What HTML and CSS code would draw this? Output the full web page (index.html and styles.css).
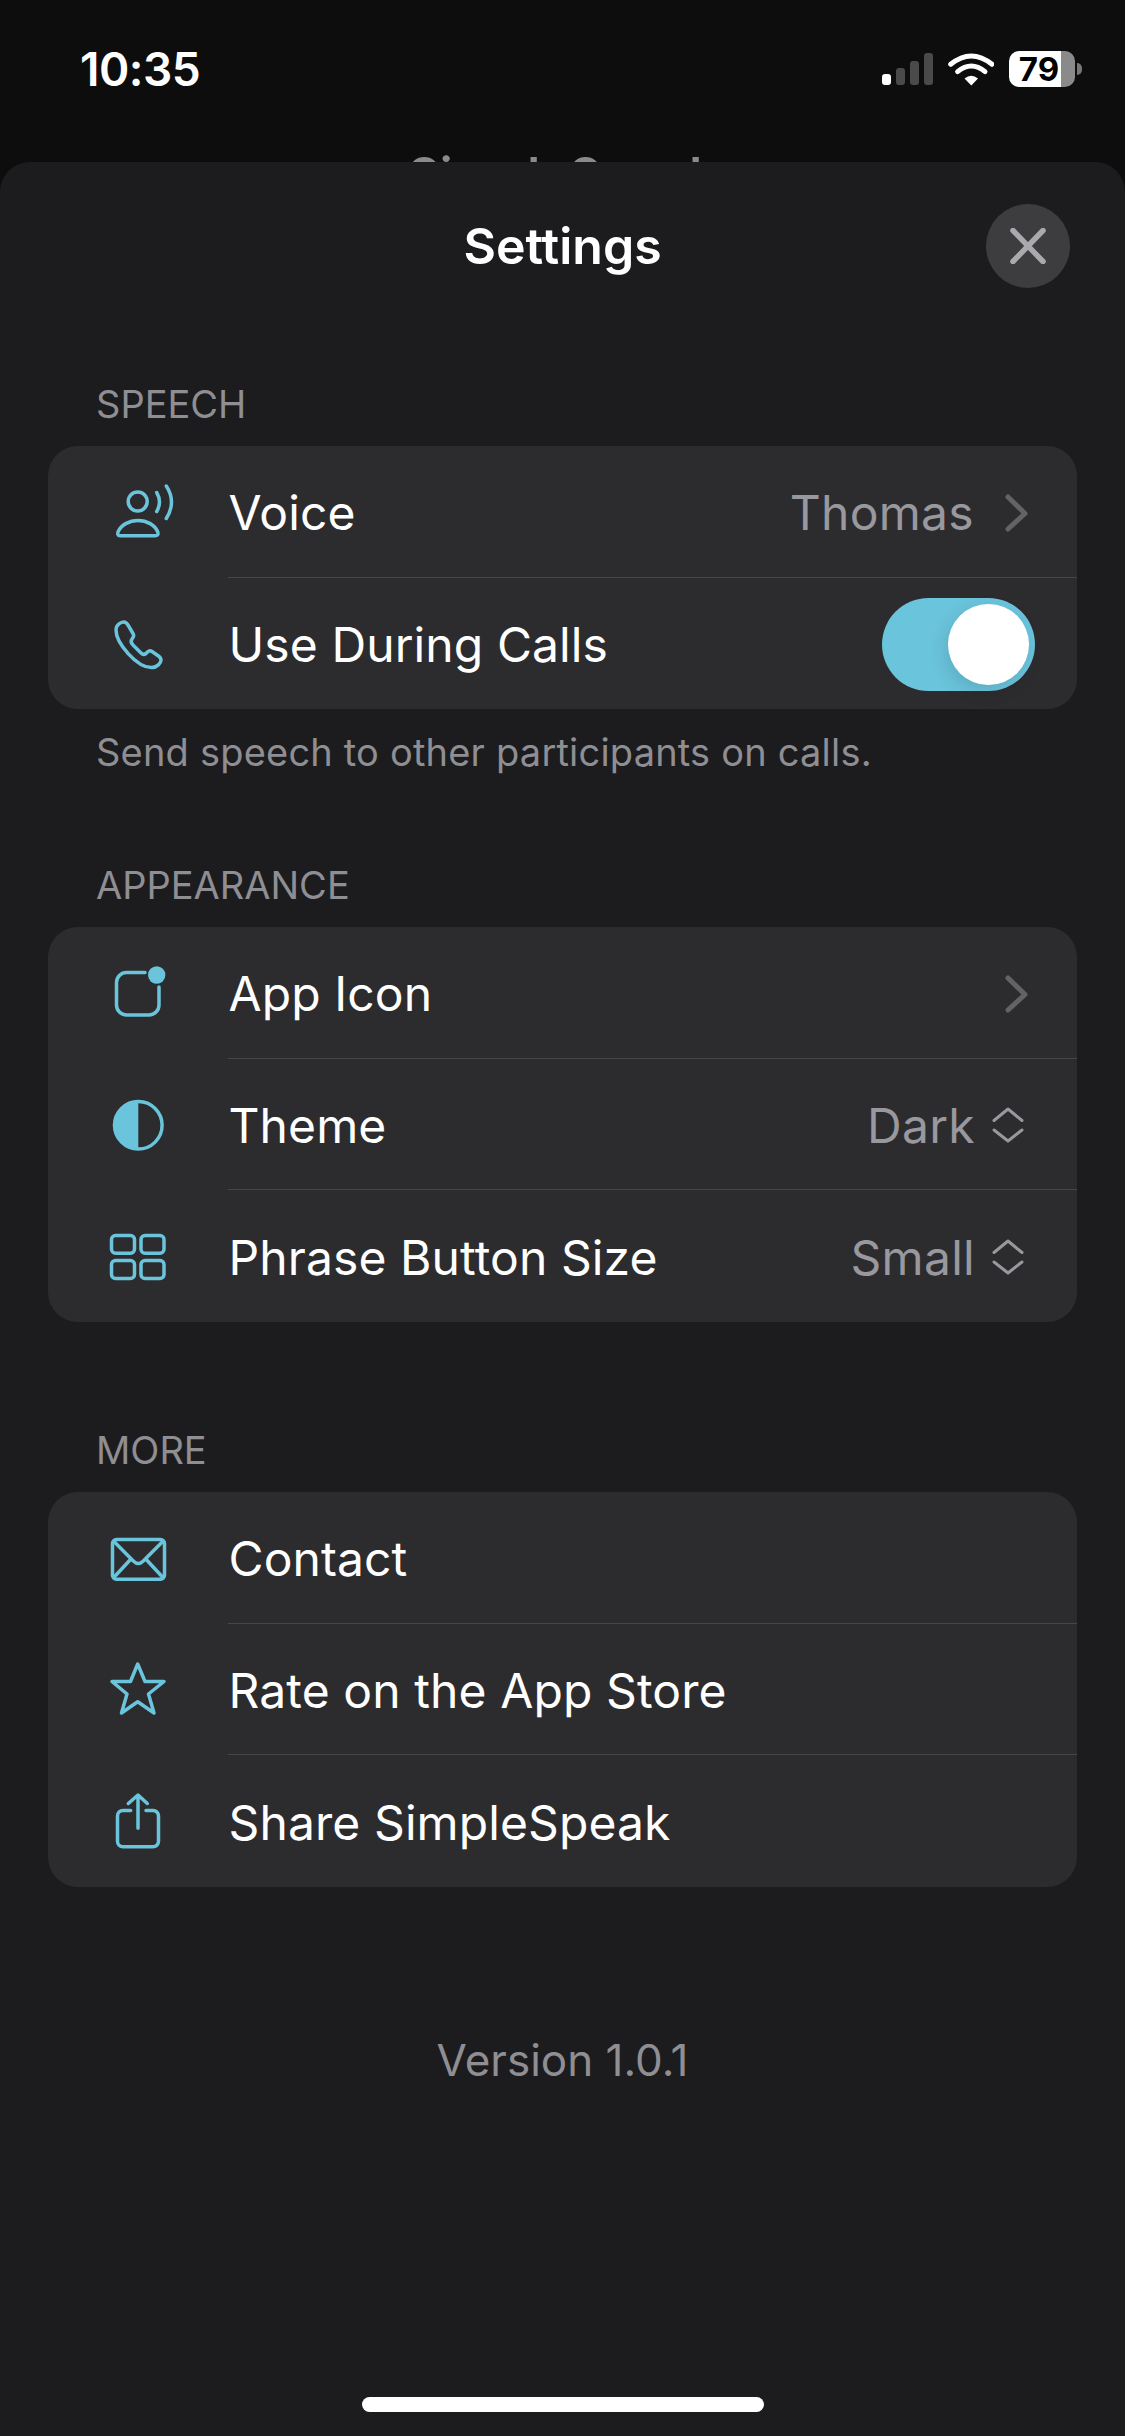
FILE: index.html
```html
<!DOCTYPE html>
<html lang="en">
<head>
    <meta charset="UTF-8">
    <meta name="viewport" content="width=device-width, initial-scale=1.0">
    <title>Settings</title>
    <link rel="stylesheet" href="styles.css">
</head>
<body>
    <div class="status-bar">
        <span class="time">10:35</span>
        <div class="status-icons">
            <div class="signal">
                <span class="bar bar-on" id="bar1"></span>
                <span class="bar" id="bar2"></span>
                <span class="bar" id="bar3"></span>
                <span class="bar" id="bar4"></span>
            </div>
            <svg class="wifi" width="46" height="33" viewBox="0 0 46 33">
                <path d="M2.7 11.3 Q23.3 -5.3 44 11.3" fill="none" stroke="#fff" stroke-width="5" stroke-linecap="round"/>
                <path d="M9.6 18.7 Q23.3 7.3 37 18.7" fill="none" stroke="#fff" stroke-width="5" stroke-linecap="round"/>
                <path d="M16.5 25.5 Q23.3 20 30 25.5 L23.3 32.5 Z" fill="#fff"/>
            </svg>
            <div class="battery">
                <span class="battery-level">79</span>
            </div>
            <span class="battery-nub"></span>
        </div>
    </div>

    <!-- title of the screen under the sheet, only its top shows -->
    <div class="behind">
        <span class="behind-title">SimpleSpeak</span>
    </div>

    <div class="sheet">
        <div class="sheet-header">
            <span class="sheet-title">Settings</span>
            <div class="close-btn">
                <svg width="36" height="36" viewBox="0 0 36 36">
                    <path d="M3 2.5 L33 33.5 M33 2.5 L3 33.5" stroke="#a9a9ae" stroke-width="5.5" stroke-linecap="round"/>
                </svg>
            </div>
        </div>

        <div class="section section-speech">
            <div class="section-label">SPEECH</div>
            <div class="card">
                <div class="row">
                    <svg class="icon" viewBox="0 0 72 72">
                        <circle cx="35.7" cy="25.5" r="9.5"/>
                        <path d="M18 59.7 H53 Q57 59.7 55.8 56 C53 49 45 44.5 36 44.5 C27 44.5 19 49 16 56 Q15 59.7 18 59.7 Z"/>
                        <path d="M54.7 16.5 Q60.3 26 54.7 35.5"/>
                        <path d="M64.3 10 Q74.7 26 64.3 42.5"/>
                    </svg>
                    <div class="row-body">
                        <span class="row-label">Voice</span>
                        <span class="row-value">Thomas</span>
                        <svg class="chevron" width="26" height="38" viewBox="0 0 26 38">
                            <path d="M4 3 L21 19.5 L4 35"/>
                        </svg>
                    </div>
                </div>
                <div class="row">
                    <svg class="icon" viewBox="0 0 72 72">
                        <path d="M14 23 C14 36 35 61 50 60.5 C55 60.5 59 56 59 53 C59 51 58 50 56.5 49 L50 44.5 C48 43 47 43.5 45.5 45 L44 46.5 C42 48 40.5 47.5 39 46 L31 38 C29 36 28.5 34 30 32 L31 30.5 C32 29 32 28 31 26.5 L26 18 C24.5 15.5 22 14.5 19.5 15.5 C16 17 14 19.5 14 23 Z"/>
                    </svg>
                    <div class="row-body">
                        <span class="row-label">Use During Calls</span>
                        <div class="toggle"><span class="knob"></span></div>
                    </div>
                </div>
            </div>
            <div class="section-note">Send speech to other participants on calls.</div>
        </div>

        <div class="section section-appearance">
            <div class="section-label">APPEARANCE</div>
            <div class="card">
                <div class="row">
                    <svg class="icon" viewBox="0 0 72 72">
                        <path d="M43 15.5 H24.5 a10 10 0 0 0 -10 10 V48 a10 10 0 0 0 10 10 H47 a10 10 0 0 0 10 -10 V30"/>
                        <circle class="icon-fill" cx="54.7" cy="18" r="8.7"/>
                    </svg>
                    <div class="row-body">
                        <span class="row-label">App Icon</span>
                        <svg class="chevron" width="26" height="38" viewBox="0 0 26 38">
                            <path d="M4 3 L21 19.5 L4 35"/>
                        </svg>
                    </div>
                </div>
                <div class="row">
                    <svg class="icon" viewBox="0 0 72 72">
                        <circle cx="36.3" cy="37.3" r="23.8"/>
                        <path class="icon-fill" d="M36.3 13.5 A23.8 23.8 0 0 0 36.3 61.1 Z"/>
                    </svg>
                    <div class="row-body">
                        <span class="row-label">Theme</span>
                        <span class="row-value">Dark</span>
                        <svg class="updown" width="32" height="38" viewBox="0 0 32 38">
                            <path d="M2 14.5 L16 3 L30 14.5 M2 24 L16 35 L30 24"/>
                        </svg>
                    </div>
                </div>
                <div class="row">
                    <svg class="icon" viewBox="0 0 72 72">
                        <rect x="9.5" y="15.5" width="23" height="17.7" rx="4"/>
                        <rect x="39" y="15.5" width="23" height="17.7" rx="4"/>
                        <rect x="9.5" y="40.5" width="23" height="18" rx="4"/>
                        <rect x="39" y="40.5" width="23" height="18" rx="4"/>
                    </svg>
                    <div class="row-body">
                        <span class="row-label">Phrase Button Size</span>
                        <span class="row-value">Small</span>
                        <svg class="updown" width="32" height="38" viewBox="0 0 32 38">
                            <path d="M2 14.5 L16 3 L30 14.5 M2 24 L16 35 L30 24"/>
                        </svg>
                    </div>
                </div>
            </div>
        </div>

        <div class="section section-more">
            <div class="section-label">MORE</div>
            <div class="card">
                <div class="row">
                    <svg class="icon" viewBox="0 0 72 72">
                        <rect x="10.5" y="17.5" width="52" height="39.7" rx="4"/>
                        <path d="M12 19.5 L31.3 39 Q36.3 44 41.3 39 L60.7 19.5 M12 55.3 L28 38 M60.7 55.3 L44.7 38"/>
                    </svg>
                    <div class="row-body">
                        <span class="row-label">Contact</span>
                    </div>
                </div>
                <div class="row">
                    <svg class="icon" viewBox="0 0 72 72">
                        <path d="M35.7 11 L43 28.5 H62 L46.5 41 L52 60 L35.7 48.7 L19.5 60 L25 41 L10 28.5 H28.5 Z"/>
                    </svg>
                    <div class="row-body">
                        <span class="row-label">Rate on the App Store</span>
                    </div>
                </div>
                <div class="row">
                    <svg class="icon" viewBox="0 0 72 72">
                        <path d="M28.7 25.5 H21 a5.5 5.5 0 0 0 -5.5 5.5 V56.3 a5.5 5.5 0 0 0 5.5 5.5 H51 a5.5 5.5 0 0 0 5.5 -5.5 V31 a5.5 5.5 0 0 0 -5.5 -5.5 H44"/>
                        <path d="M36 43.3 V10.7 M26.3 18.5 L36 10 L45.3 18.5"/>
                    </svg>
                    <div class="row-body">
                        <span class="row-label">Share SimpleSpeak</span>
                    </div>
                </div>
            </div>
        </div>

        <div class="version">Version 1.0.1</div>
        <div class="home-indicator"></div>
    </div>
</body>
</html>
```

FILE: styles.css
```css
html, body {
    margin: 0;
    padding: 0;
}
body {
    width: 1125px;
    height: 2436px;
    overflow: hidden;
    background-color: #0d0d0e;
    color: #fff;
    font-family: Inter, "Noto Sans", sans-serif;
    display: flex;
    flex-direction: column;
}

/* status bar */
.status-bar {
    height: 136px;
    padding: 45px 43px 0 80px;
    box-sizing: border-box;
    display: flex;
    justify-content: space-between;
    align-items: flex-start;
}
.time {
    font-size: 46px;
    font-weight: 600;
    line-height: 48px;
    letter-spacing: -0.5px;
}
.status-icons {
    display: flex;
    align-items: center;
    height: 36px;
    margin-top: 6px;
}
.signal {
    display: flex;
    align-items: flex-end;
    gap: 5px;
    height: 32px;
    margin-right: 15px;
}
.bar {
    width: 9px;
    border-radius: 3px;
    background-color: #4a4a4a;
}
.bar-on {
    background-color: #fff;
}
#bar1 { height: 11px; }
#bar2 { height: 17px; }
#bar3 { height: 24px; }
#bar4 { height: 32px; }
.wifi {
    margin-right: 15px;
}
.battery {
    width: 66px;
    height: 36px;
    border-radius: 10px;
    background: linear-gradient(to right, #fff 79%, #8a8a8a 79%);
    color: #000;
    font-size: 33px;
    font-weight: 700;
    line-height: 36px;
    text-align: center;
}
.battery-level {
    display: inline-block;
    margin-left: -6px;
}
.battery-nub {
    width: 5px;
    height: 12px;
    margin-left: 2px;
    border-radius: 0 6px 6px 0;
    background-color: #777;
}

/* the screen underneath */
.behind {
    height: 26px;
    overflow: hidden;
    text-align: center;
    flex-shrink: 0;
}
.behind-title {
    display: block;
    font-size: 49px;
    font-weight: 600;
    line-height: 60px;
    margin-top: 10px;
    color: #8a8a8c;
}

/* sheet */
.sheet {
    flex: 1;
    display: flex;
    flex-direction: column;
    background-color: #1c1c1e;
    border-radius: 30px 30px 0 0;
}
.sheet-header {
    height: 168px;
    flex-shrink: 0;
    position: relative;
    display: flex;
    align-items: center;
    justify-content: center;
}
.sheet-title {
    font-size: 50px;
    font-weight: 600;
}
.close-btn {
    position: absolute;
    top: 42px;
    right: 55px;
    width: 84px;
    height: 84px;
    border-radius: 50%;
    background-color: #3d3d40;
    display: flex;
    align-items: center;
    justify-content: center;
}

/* sections */
.section {
    margin: 0 48px;
}
.section-speech {
    margin-top: 50px;
}
.section-appearance {
    margin-top: 84.67px;
}
.section-more {
    margin-top: 104px;
}
.section-label {
    font-size: 38px;
    line-height: 48px;
    color: #8e8e93;
    margin: 0 0 18px 48px;
}
.section-note {
    font-size: 38px;
    line-height: 48px;
    color: #8e8e93;
    margin: 19px 0 0 48px;
    letter-spacing: 0.2px;
}
.card {
    background-color: #2c2c2e;
    border-radius: 30px;
    overflow: hidden;
}
.row {
    height: 131.67px;
    display: flex;
    align-items: center;
}
.row .icon {
    width: 72px;
    height: 72px;
    margin: 0 54px 0 54px;
    flex-shrink: 0;
    fill: none;
    stroke: #6ac4dc;
    stroke-width: 3.5;
    stroke-linecap: round;
    stroke-linejoin: round;
}
.row .icon .icon-fill {
    fill: #6ac4dc;
    stroke: none;
}
.row-body {
    flex: 1;
    height: 100%;
    box-sizing: border-box;
    padding: 3px 47px 0 0.5px;
    display: flex;
    align-items: center;
    border-bottom: 1px solid #464648;
}
.row:last-child .row-body {
    border-bottom-color: transparent;
}
.row-label {
    flex: 1;
    font-size: 48px;
    letter-spacing: 0.1px;
}
.row-value {
    font-size: 48px;
    letter-spacing: 0.3px;
    color: #98989e;
}
.chevron {
    margin-left: 30px;
    fill: none;
    stroke: #636366;
    stroke-width: 5;
    stroke-linecap: round;
    stroke-linejoin: round;
}
.updown {
    margin: 0 6px 0 17px;
    fill: none;
    stroke: #98989e;
    stroke-width: 3;
    stroke-linecap: round;
    stroke-linejoin: round;
}
.toggle {
    width: 153px;
    height: 93px;
    margin-right: -5px;
    padding: 6px;
    box-sizing: border-box;
    border-radius: 47px;
    background-color: #6ac4dc;
    display: flex;
    justify-content: flex-end;
}
.knob {
    width: 81px;
    height: 81px;
    border-radius: 50%;
    background-color: #fff;
    box-shadow: -3px 6px 18px rgba(0, 0, 0, 0.12);
}

/* footer */
.version {
    margin-top: 143px;
    font-size: 44px;
    line-height: 60px;
    text-align: center;
    color: #8e8e93;
}
.home-indicator {
    width: 402px;
    height: 15px;
    margin: auto auto 24px;
    border-radius: 8px;
    background-color: #fff;
}
```
